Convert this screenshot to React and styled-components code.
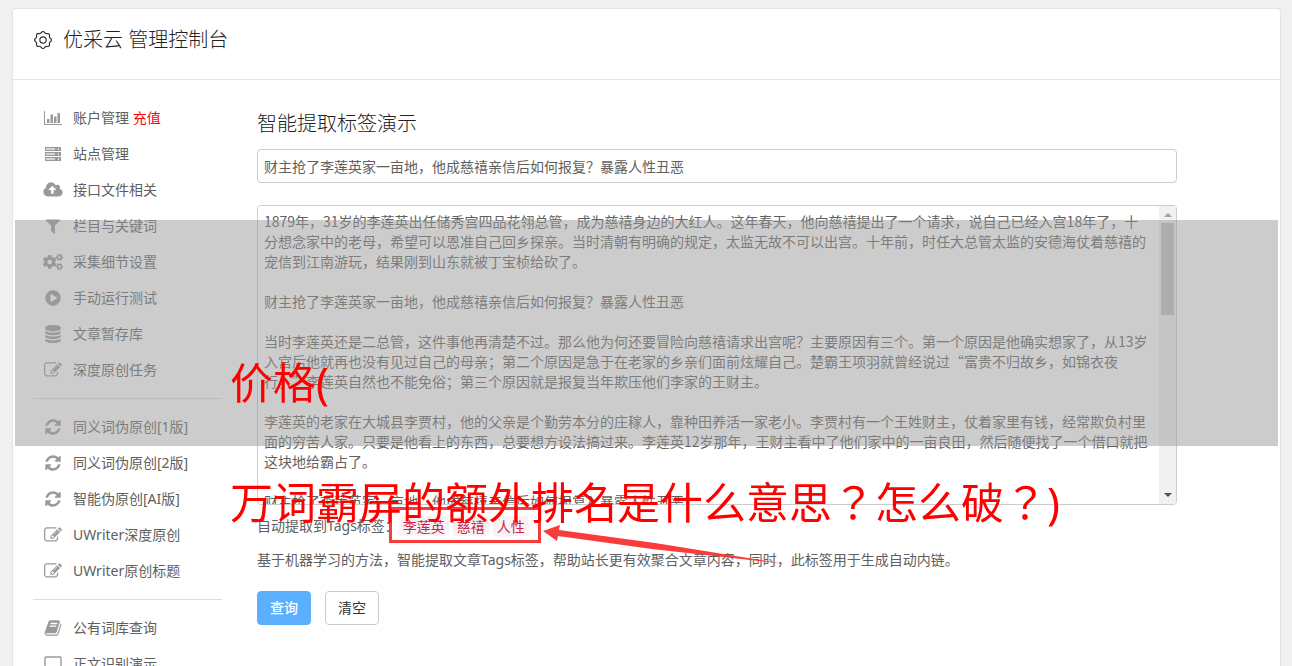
import React from "react";
import styled, { createGlobalStyle } from "styled-components";
import { FaCogs } from "react-icons/fa";

const Global = createGlobalStyle`
  * { box-sizing: border-box; }
  body {
    margin: 0;
    background: #f0f0f0;
    color: #606060;
    font: 14px/20px "Noto Sans", "Noto Sans CJK SC", sans-serif;
  }
`;

const Page = styled.div`
  position: relative;
  height: 100vh;
  overflow: hidden;
  padding: 8px 11px 0 12px;
`;

const Card = styled.div`
  min-height: 100%;
  background: #fff;
  border: 1px solid #e4e4e4;
  border-bottom: 0;
  border-radius: 4px 4px 0 0;
`;

const Header = styled.header`
  display: flex;
  align-items: center;
  gap: 10px;
  height: 71px;
  padding: 0 20px 8px;
  border-bottom: 1px solid #e4e4e4;
  color: #222;
`;

const Heading = styled.h1`
  margin: 0;
  font-size: 20px;
  line-height: 28px;
  font-weight: 300;
`;

const Columns = styled.div`
  display: flex;
  align-items: flex-start;
  gap: 35px;
  padding: 20px 103px 0 20px;
`;

const Sidebar = styled.nav`
  flex: 0 0 189px;
`;

const MenuGroup = styled.ul`
  list-style: none;
  margin: 0 0 10px;
  padding: 0 0 10px;
  border-bottom: 1px solid #ddd;
`;

const MenuLink = styled.a`
  display: flex;
  align-items: center;
  gap: 10px;
  height: 36px;
  padding-left: 10px;
  color: #606060;
  text-decoration: none;
  white-space: pre;
  svg { flex: 0 0 20px; color: #999; }
`;

const Hot = styled.span`
  color: #f00;
`;

const Main = styled.main`
  flex: 1;
  min-width: 0;
  padding-top: 9px;
`;

const Title = styled.h2`
  margin: 0 0 10px;
  font-size: 20px;
  line-height: 30px;
  font-weight: 300;
  color: #222;
`;

const TextInput = styled.input`
  display: block;
  width: 100%;
  height: 34px;
  padding: 0 6px;
  border: 1px solid #ccc;
  border-radius: 4px;
  color: #606060;
  font: inherit;
`;

const Editor = styled.div`
  position: relative;
  margin: 22px 0 11px;
`;

const TextArea = styled.textarea`
  display: block;
  width: 100%;
  height: 300px;
  padding: 5px 26px 5px 6px;
  border: 1px solid #ccc;
  border-radius: 4px;
  color: #606060;
  font: 14px/20px "Noto Sans CJK SC", sans-serif;
  text-spacing-trim: space-all;
  resize: none;
  scrollbar-width: none;
`;

const ScrollTrack = styled.div`
  position: absolute;
  top: 1px;
  right: 1px;
  bottom: 1px;
  width: 17px;
  display: flex;
  flex-direction: column;
  align-items: center;
  border-radius: 0 3px 3px 0;
  background: #f1f1f1;
`;

const ScrollThumb = styled.div`
  width: 13px;
  height: 92px;
  margin-bottom: auto;
  background: #c1c1c1;
`;

const Line = styled.p`
  display: flex;
  align-items: center;
  margin: 0 0 14px;
  min-height: 20px;
`;

const TagList = styled.span`
  position: relative;
  display: flex;
  gap: 4px;
  &::after {
    content: "";
    position: absolute;
    inset: -9px -12px -7px -10px;
    border: 3px solid #f93b3b;
  }
`;

const Tag = styled.code`
  padding: 0 4px;
  border-radius: 4px;
  background: #f9f2f4;
  color: #c7254e;
  font: 14px/20px "Noto Sans CJK SC", sans-serif;
`;

const Actions = styled.div`
  display: flex;
  gap: 14px;
  padding-top: 7px;
`;

const Button = styled.button`
  width: 54px;
  height: 34px;
  padding: 0;
  border: 1px solid ${(p) => (p.$primary ? "#5aafff" : "#ccc")};
  border-radius: 4px;
  background: ${(p) => (p.$primary ? "#5aafff" : "#fff")};
  color: ${(p) => (p.$primary ? "#fff" : "#333")};
  font: inherit;
  font-weight: ${(p) => (p.$primary ? 500 : 400)};
`;

const Veil = styled.div`
  position: absolute;
  top: 220px;
  left: 15px;
  right: 14px;
  height: 226px;
  background: rgba(153, 153, 153, 0.5);
  pointer-events: none;
`;

const Caption = styled.div`
  position: absolute;
  top: 323px;
  left: 230px;
  right: 14px;
  color: #f00;
  font-family: "Noto Sans", "Noto Sans CJK TC", sans-serif;
  font-size: 43px;
  line-height: 120px;
  pointer-events: none;
  p { margin: 0; }
`;

const Arrow = styled.svg`
  position: absolute;
  top: 520px;
  left: 540px;
  pointer-events: none;
`;

const paths = {
  cloud: "M1280 864q0-14-9-23l-352-352q-9-9-23-9t-23 9l-351 351q-10 12-10 24 0 14 9 23t23 9h224v352q0 13 9.5 22.5t22.5 9.5h192q13 0 22.5-9.5t9.5-22.5v-352h224q13 0 22.5-9.5t9.5-22.5zm640 288q0 159-112.5 271.5t-271.5 112.5h-1088q-185 0-316.5-131.5t-131.5-316.5q0-130 70-240t188-165q-2-30-2-43 0-212 150-362t362-150q156 0 285.5 87t188.5 231q71-62 166-62 106 0 181 75t75 181q0 76-41 138 130 31 213.5 135.5t83.5 238.5z",
  filter: "M1595 295q17 41-14 70l-493 493v742q0 42-39 59-13 5-25 5-27 0-45-19l-256-256q-19-19-19-45v-486l-493-493q-31-29-14-70 17-39 59-39h1280q42 0 59 39z",
  play: "M896 128q209 0 385.5 103t279.5 279.5 103 385.5-103 385.5-279.5 279.5-385.5 103-385.5-103-279.5-279.5-103-385.5 103-385.5 279.5-279.5 385.5-103zm384 823q32-18 32-55t-32-55l-544-320q-31-19-64-1-32 19-32 56v640q0 37 32 56 16 8 32 8 17 0 32-9z",
  database: "M896 768q237 0 443-43t325-127v170q0 69-103 128t-280 93.5-385 34.5-385-34.5-280-93.5-103-128v-170q119 84 325 127t443 43zm0 768q237 0 443-43t325-127v170q0 69-103 128t-280 93.5-385 34.5-385-34.5-280-93.5-103-128v-170q119 84 325 127t443 43zm0-384q237 0 443-43t325-127v170q0 69-103 128t-280 93.5-385 34.5-385-34.5-280-93.5-103-128v-170q119 84 325 127t443 43zm0-1152q208 0 385 34.5t280 93.5 103 128v128q0 69-103 128t-280 93.5-385 34.5-385-34.5-280-93.5-103-128v-128q0-69 103-128t280-93.5 385-34.5z",
  edit: "M888 1184l116-116-152-152-116 116v56h96v96h56zm440-720q-16-16-33 1l-350 350q-17 17-1 33t33-1l350-350q17-17 1-33zm80 594v190q0 119-84.5 203.5t-203.5 84.5h-832q-119 0-203.5-84.5t-84.5-203.5v-832q0-119 84.5-203.5t203.5-84.5h832q63 0 117 25 15 7 18 23 3 17-9 29l-49 49q-14 14-32 8-23-6-45-6h-832q-66 0-113 47t-47 113v832q0 66 47 113t113 47h832q66 0 113-47t47-113v-126q0-13 9-22l64-64q15-15 35-7t20 29zm-96-738l288 288-672 672h-288v-288zm444 132l-92 92-288-288 92-92q28-28 68-28t68 28l152 152q28 28 28 68t-28 68z",
  refresh: "M1639 1056q0 5-1 7-64 268-268 434.5t-478 166.5q-146 0-282.5-55t-243.5-157l-129 129q-19 19-45 19t-45-19-19-45v-448q0-26 19-45t45-19h448q26 0 45 19t19 45-19 45l-137 137q71 66 161 102t187 36q134 0 250-65t186-179q11-17 53-117 8-23 30-23h192q13 0 22.5 9.5t9.5 22.5zm25-800v448q0 26-19 45t-45 19h-448q-26 0-45-19t-19-45 19-45l138-138q-148-137-349-137-134 0-250 65t-186 179q-11 17-53 117-8 23-30 23h-199q-13 0-22.5-9.5t-9.5-22.5v-7q65-268 270-434.5t480-166.5q146 0 284 55.5t245 156.5l130-129q19-19 45-19t45 19 19 45z",
  book: "M1703 478q40 57 18 129l-275 906q-19 64-76.5 107.5t-122.5 43.5h-923q-77 0-148.5-53.5t-99.5-131.5q-24-67-2-127 0-4 3-27t4-37q1-8-3-21.5t-3-19.5q2-11 8-21t16.5-23.5 16.5-23.5q23-38 45-91.5t30-91.5q3-10 .5-30t-.5-28q3-11 17-28t17-23q21-36 42-92t25-90q1-9-2.5-32t.5-28q4-13 22-30.5t22-22.5q19-26 42.5-84.5t27.5-96.5q1-8-3-25.5t-2-26.5q2-8 9-18t18-23 17-21q8-12 16.5-30.5t15-35 16-36 19.5-32 26.5-23.5 36-11.5 47.5 5.5l-1 3q38-9 51-9h761q74 0 114 56t18 130l-274 906q-36 119-71.5 153.5t-128.5 34.5h-869q-27 0-38 15-11 16-1 43 24 70 144 70h923q29 0 56-15.5t35-41.5l300-987q7-22 5-57 38 15 59 43zm-1064 2q-4 13 2 22.5t20 9.5h608q13 0 25.5-9.5t16.5-22.5l21-64q4-13-2-22.5t-20-9.5h-608q-13 0-25.5 9.5t-16.5 22.5zm-83 256q-4 13 2 22.5t20 9.5h608q13 0 25.5-9.5t16.5-22.5l21-64q4-13-2-22.5t-20-9.5h-608q-13 0-25.5 9.5t-16.5 22.5z",
};

function Icon({ name }) {
  if (name === "cogs") return <FaCogs size={18} />;
  if (name === "chart")
    return (
      <svg width="20" height="18" viewBox="0 0 20 18" fill="currentColor" aria-hidden="true">
        <path d="M1 2h1v13h17v1H1zM4 10h2.5v4H4zM7.500 5.500h2.500v8.500H7.500zM11 7.500h2.500v6.500H11zM14.500 4H17v10h-2.500z" />
      </svg>
    );
  if (name === "server")
    return (
      <svg width="20" height="18" viewBox="0 0 20 18" aria-hidden="true">
        {[2, 7, 12].map((y) => (
          <g key={y}>
            <rect x="2" y={y} width="16" height="4" fill="currentColor" />
            <rect x="3" y={y + 1} width="9" height="2" fill="#d4d4d4" />
            <rect x="15" y={y + 1} width="1" height="2" fill="#e4e4e4" />
          </g>
        ))}
      </svg>
    );
  if (name === "laptop")
    return (
      <svg width="20" height="18" viewBox="0 0 20 18" fill="none" stroke="currentColor" aria-hidden="true">
        <rect x="2" y="2" width="16" height="12" rx="1" strokeWidth="1.4" />
        <path d="M0 16h20" strokeWidth="2" />
      </svg>
    );
  const cloud = name === "cloud";
  return (
    <svg width="20" height="18" viewBox={cloud ? "0 0 1920 1792" : "0 0 1792 1792"} fill="currentColor" aria-hidden="true">
      <path d={paths[name]} />
    </svg>
  );
}

const groups = [
  [
    ["chart", "账户管理 ", "充值"],
    ["server", "站点管理"],
    ["cloud", "接口文件相关"],
    ["filter", "栏目与关键词"],
    ["cogs", "采集细节设置"],
    ["play", "手动运行测试"],
    ["database", "文章暂存库"],
    ["edit", "深度原创任务"],
  ],
  [
    ["refresh", "同义词伪原创[1版]"],
    ["refresh", "同义词伪原创[2版]"],
    ["refresh", "智能伪原创[AI版]"],
    ["edit", "UWriter深度原创"],
    ["edit", "UWriter原创标题"],
  ],
  [
    ["book", "公有词库查询"],
    ["laptop", "正文识别演示"],
  ],
];

const headline = "财主抢了李莲英家一亩地，他成慈禧亲信后如何报复？暴露人性丑恶";

const article = [
  "1879年，31岁的李莲英出任储秀宫四品花翎总管，成为慈禧身边的大红人。这年春天，他向慈禧提出了一个请求，说自己已经入宫18年了，十分想念家中的老母，希望可以恩准自己回乡探亲。当时清朝有明确的规定，太监无故不可以出宫。十年前，时任大总管太监的安德海仗着慈禧的宠信到江南游玩，结果刚到山东就被丁宝桢给砍了。",
  headline,
  "当时李莲英还是二总管，这件事他再清楚不过。那么他为何还要冒险向慈禧请求出宫呢？主要原因有三个。第一个原因是他确实想家了，从13岁入宫后他就再也没有见过自己的母亲；第二个原因是急于在老家的乡亲们面前炫耀自己。楚霸王项羽就曾经说过“富贵不归故乡，如锦衣夜行。”李莲英自然也不能免俗；第三个原因就是报复当年欺压他们李家的王财主。",
  "李莲英的老家在大城县李贾村，他的父亲是个勤劳本分的庄稼人，靠种田养活一家老小。李贾村有一个王姓财主，仗着家里有钱，经常欺负村里面的穷苦人家。只要是他看上的东西，总要想方设法搞过来。李莲英12岁那年，王财主看中了他们家中的一亩良田，然后随便找了一个借口就把这块地给霸占了。",
  headline,
].join("\n\n");

const gearPoints = Array.from({ length: 64 }, (_, i) => {
  const a = (i / 64) * Math.PI * 2;
  const r = 7.8 + 0.7 * Math.cos(a * 8);
  return `${(10 + r * Math.cos(a)).toFixed(2)},${(10 + r * Math.sin(a)).toFixed(2)}`;
}).join(" ");

export default function App() {
  return (
    <Page lang="zh-CN">
      <Global />
      <Card>
        <Header>
          <svg width="20" height="20" viewBox="0 0 20 20" fill="none" stroke="#333" strokeWidth="1.2" aria-hidden="true">
            <polygon points={gearPoints} />
            <circle cx="10" cy="10" r="3.2" />
          </svg>
          <Heading>优采云 管理控制台</Heading>
        </Header>
        <Columns>
          <Sidebar>
            {groups.map((items, i) => (
              <MenuGroup key={i}>
                {items.map(([icon, label, hot]) => (
                  <li key={label}>
                    <MenuLink href="#">
                      <Icon name={icon} />
                      <span>{label}{hot && <Hot>{hot}</Hot>}</span>
                    </MenuLink>
                  </li>
                ))}
              </MenuGroup>
            ))}
          </Sidebar>
          <Main>
            <Title>智能提取标签演示</Title>
            <TextInput aria-label="标题" defaultValue={headline} />
            <Editor>
              <TextArea aria-label="正文" defaultValue={article} />
              <ScrollTrack aria-hidden="true">
                <svg width="17" height="17" viewBox="0 0 17 17"><path d="M5 11h8L9 7z" fill="#a3a3a3" /></svg>
                <ScrollThumb />
                <svg width="17" height="17" viewBox="0 0 17 17"><path d="M5 6h8L9 10z" fill="#505050" /></svg>
              </ScrollTrack>
            </Editor>
            <Line>
              自动提取到Tags标签：
              <TagList>
                <Tag>李莲英</Tag>
                <Tag>慈禧</Tag>
                <Tag>人性</Tag>
              </TagList>
            </Line>
            <Line>基于机器学习的方法，智能提取文章Tags标签，帮助站长更有效聚合文章内容，同时，此标签用于生成自动内链。</Line>
            <Actions>
              <Button type="button" $primary>查询</Button>
              <Button type="button">清空</Button>
            </Actions>
          </Main>
        </Columns>
      </Card>
      <Veil />
      <Caption lang="zh-TW">
        <p>价格(</p>
        <p>万词霸屏的额外排名是什么意思？怎么破？)</p>
      </Caption>
      <Arrow width="250" height="50" viewBox="0 0 250 50" aria-hidden="true">
        <path d="M3 11L20 5L19 10L115 23L245 44L112 29L18 16L17 21Z" fill="#f93b3b" />
      </Arrow>
    </Page>
  );
}
